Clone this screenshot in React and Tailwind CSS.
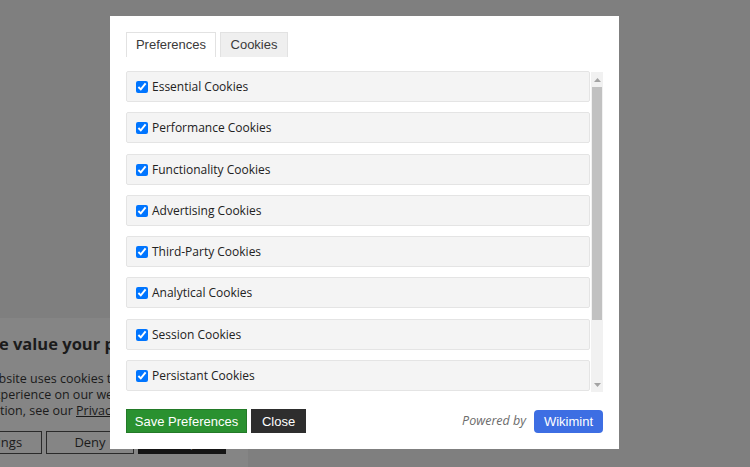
const cookies = [
  "Essential Cookies",
  "Performance Cookies",
  "Functionality Cookies",
  "Advertising Cookies",
  "Third-Party Cookies",
  "Analytical Cookies",
  "Session Cookies",
  "Persistant Cookies",
];

const sans = { fontFamily: "'Liberation Sans', Arial, sans-serif" };
const open = { fontFamily: "'Open Sans', 'Noto Sans', sans-serif" };

const Banner = () => (
  <div
    className="absolute left-0 bottom-0 w-[248px] h-[149px] bg-[#858585] overflow-hidden text-[#1b1b1b]"
    style={open}
  >
    <div className="pt-[14px] whitespace-nowrap">
      <h2 className="ml-[-17px] text-[16.5px] font-bold leading-[24px]">We value your privacy</h2>
      <p className="mt-[15px] text-[12.5px] leading-[16px]">
        <span className="block ml-[-20px]">Website uses cookies to improve your</span>
        <span className="block ml-[-13px]">experience on our website. For more</span>
        <span className="block ml-[-13px]">
          action, see our <span className="underline">Privacy Policy</span>.
        </span>
      </p>
    </div>
    <div className="flex gap-[4px] ml-[-46px] mt-[12px] text-[13px]">
      <button className="w-[88px] h-[23px] border border-[#2a2a2a] leading-none">Settings</button>
      <button className="w-[88px] h-[23px] border border-[#2a2a2a] leading-none">Deny</button>
      <button className="w-[88px] h-[23px] bg-[#151515] text-[#6f6f6f] leading-none">Accept</button>
    </div>
  </div>
);

const Arrow = ({ down }) => (
  <div className="h-[15px] flex items-center justify-center">
    <svg width="7" height="4" viewBox="0 0 7 4">
      <path d={down ? "M0 0H7L3.5 4Z" : "M0 4H7L3.5 0Z"} fill="#a3a3a3" />
    </svg>
  </div>
);

const Modal = () => (
  <div className="absolute left-[110px] top-[16px] w-[509px] h-[433px] bg-white px-4 pt-4">
    {/* Tabs */}
    <div className="flex gap-[4px] text-[13px] text-[#3a3a3a]" style={sans}>
      <div className="w-[90px] h-[25px] flex items-center justify-center bg-white border border-b-0 border-[#e2e2e2]">
        Preferences
      </div>
      <div className="w-[68px] h-[25px] flex items-center justify-center bg-[#efefef] border border-b-0 border-[#e2e2e2]">
        Cookies
      </div>
    </div>

    {/* List */}
    <div className="mt-[13px] h-[322px] flex">
      <div className="w-[464px] pt-[1px] flex flex-col gap-[10.3px] overflow-hidden">
        {cookies.map((c) => (
          <label
            key={c}
            className="h-[31px] shrink-0 flex items-center gap-[4px] pl-[9px] pt-[1px] bg-[#f4f4f4] border border-[#e4e4e4] rounded-[2px] text-[12px] text-[#222]"
            style={open}
          >
            <input type="checkbox" defaultChecked className="w-[12px] h-[12px] m-0" />
            {c}
          </label>
        ))}
      </div>
      <div className="ml-[1px] mt-[2px] w-[12px] h-[320px] bg-[#f1f1f1] flex flex-col">
        <Arrow />
        <div className="h-[233px] mx-[1px] bg-[#c1c1c1]" />
        <div className="flex-1" />
        <Arrow down />
      </div>
    </div>

    {/* Footer */}
    <div className="mt-[17px] flex items-center">
      <button
        className="w-[121px] h-[24px] bg-[#2a9130] border border-[#237a28] text-white text-[13px] leading-none"
        style={sans}
      >
        Save Preferences
      </button>
      <button
        className="ml-[4px] w-[55px] h-[24px] bg-[#2e2e2e] text-white text-[13px] leading-none"
        style={sans}
      >
        Close
      </button>
      <span className="ml-auto mr-[8px] text-[12.5px] italic text-[#6b6b6b]" style={open}>
        Powered by
      </span>
      <button
        className="w-[69px] h-[23px] rounded-[4px] bg-[#3d6ee3] text-white text-[13px] leading-none"
        style={sans}
      >
        Wikimint
      </button>
    </div>
  </div>
);

export default function App() {
  return (
    <div className="relative w-full h-[467px] bg-[#7f7f7f] overflow-hidden">
      <Banner />
      <Modal />
    </div>
  );
}
